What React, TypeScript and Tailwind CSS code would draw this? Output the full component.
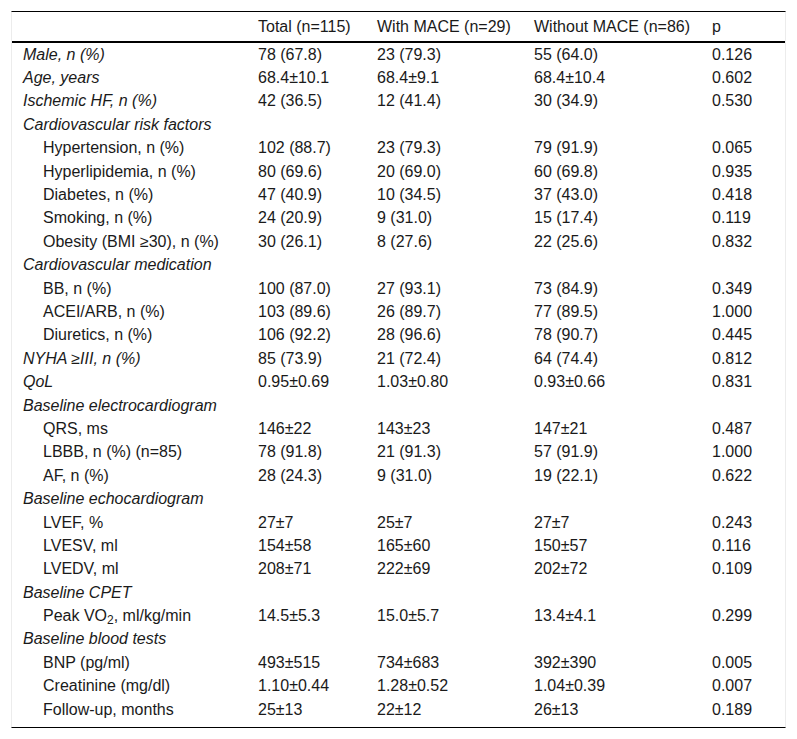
import type { ReactNode } from 'react'

type Row = {
  label: ReactNode
  kind: 'main' | 'group' | 'sub'
  values?: [string, string, string, string]
}

const rows: Row[] = [
  { label: 'Male, n (%)', kind: 'main', values: ['78 (67.8)', '23 (79.3)', '55 (64.0)', '0.126'] },
  { label: 'Age, years', kind: 'main', values: ['68.4±10.1', '68.4±9.1', '68.4±10.4', '0.602'] },
  { label: 'Ischemic HF, n (%)', kind: 'main', values: ['42 (36.5)', '12 (41.4)', '30 (34.9)', '0.530'] },
  { label: 'Cardiovascular risk factors', kind: 'group' },
  { label: 'Hypertension, n (%)', kind: 'sub', values: ['102 (88.7)', '23 (79.3)', '79 (91.9)', '0.065'] },
  { label: 'Hyperlipidemia, n (%)', kind: 'sub', values: ['80 (69.6)', '20 (69.0)', '60 (69.8)', '0.935'] },
  { label: 'Diabetes, n (%)', kind: 'sub', values: ['47 (40.9)', '10 (34.5)', '37 (43.0)', '0.418'] },
  { label: 'Smoking, n (%)', kind: 'sub', values: ['24 (20.9)', '9 (31.0)', '15 (17.4)', '0.119'] },
  { label: 'Obesity (BMI ≥30), n (%)', kind: 'sub', values: ['30 (26.1)', '8 (27.6)', '22 (25.6)', '0.832'] },
  { label: 'Cardiovascular medication', kind: 'group' },
  { label: 'BB, n (%)', kind: 'sub', values: ['100 (87.0)', '27 (93.1)', '73 (84.9)', '0.349'] },
  { label: 'ACEI/ARB, n (%)', kind: 'sub', values: ['103 (89.6)', '26 (89.7)', '77 (89.5)', '1.000'] },
  { label: 'Diuretics, n (%)', kind: 'sub', values: ['106 (92.2)', '28 (96.6)', '78 (90.7)', '0.445'] },
  { label: 'NYHA ≥III, n (%)', kind: 'main', values: ['85 (73.9)', '21 (72.4)', '64 (74.4)', '0.812'] },
  { label: 'QoL', kind: 'main', values: ['0.95±0.69', '1.03±0.80', '0.93±0.66', '0.831'] },
  { label: 'Baseline electrocardiogram', kind: 'group' },
  { label: 'QRS, ms', kind: 'sub', values: ['146±22', '143±23', '147±21', '0.487'] },
  { label: 'LBBB, n (%) (n=85)', kind: 'sub', values: ['78 (91.8)', '21 (91.3)', '57 (91.9)', '1.000'] },
  { label: 'AF, n (%)', kind: 'sub', values: ['28 (24.3)', '9 (31.0)', '19 (22.1)', '0.622'] },
  { label: 'Baseline echocardiogram', kind: 'group' },
  { label: 'LVEF, %', kind: 'sub', values: ['27±7', '25±7', '27±7', '0.243'] },
  { label: 'LVESV, ml', kind: 'sub', values: ['154±58', '165±60', '150±57', '0.116'] },
  { label: 'LVEDV, ml', kind: 'sub', values: ['208±71', '222±69', '202±72', '0.109'] },
  { label: 'Baseline CPET', kind: 'group' },
  {
    label: (
      <>
        Peak VO<sub>2</sub>, ml/kg/min
      </>
    ),
    kind: 'sub',
    values: ['14.5±5.3', '15.0±5.7', '13.4±4.1', '0.299'],
  },
  { label: 'Baseline blood tests', kind: 'group' },
  { label: 'BNP (pg/ml)', kind: 'sub', values: ['493±515', '734±683', '392±390', '0.005'] },
  { label: 'Creatinine (mg/dl)', kind: 'sub', values: ['1.10±0.44', '1.28±0.52', '1.04±0.39', '0.007'] },
  { label: 'Follow-up, months', kind: 'sub', values: ['25±13', '22±12', '26±13', '0.189'] },
]

// column widths measured off the picture
const cols = 'grid grid-cols-[246px_119px_157px_178px_1fr]'

export default function App() {
  return (
    <div className="min-h-screen bg-white pt-[11px] px-[11px] text-[16px] text-[#1a1a1a] font-['Liberation_Sans',Arial,sans-serif]">
      <div className="w-[775px] border-x border-[#ececec] border-t border-t-black border-b border-b-black pb-[6px]">
        {/* header */}
        <div className={`${cols} h-[31px] items-center border-b-2 border-black leading-none`}>
          <div />
          <div>Total (n=115)</div>
          <div>With MACE (n=29)</div>
          <div>Without MACE (n=86)</div>
          <div>p</div>
        </div>

        {rows.map((row, i) => (
          <div key={i} className={`${cols} h-[23.4px] items-center leading-none`}>
            <div className={row.kind === 'sub' ? 'pl-[31px]' : 'pl-[11px] italic'}>
              {row.label}
            </div>
            {row.values?.map((v, j) => (
              <div key={j}>{v}</div>
            ))}
          </div>
        ))}
      </div>
    </div>
  )
}
